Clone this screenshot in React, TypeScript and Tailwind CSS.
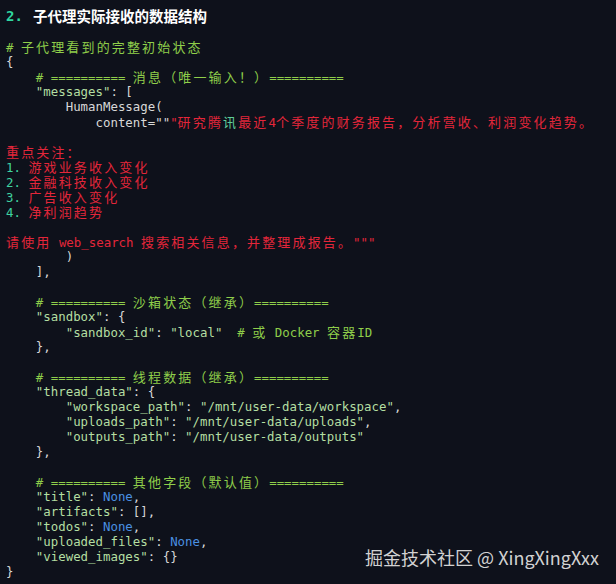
import React from "react";

type Tok = [string, string];

const W = "text-[#d8d8d8]";
const C = "text-[#8fce4a]";
const S = "text-[#b4dfa2]";
const R = "text-[#e3263a]";
const N = "text-[#3fd3a0]";
const K = "text-[#4a90e2]";
const G = "text-[#5fcf9a]";

const lines: Tok[][] = [
  [["# 子代理看到的完整初始状态", C]],
  [["{", W]],
  [["    # ========== 消息（唯一输入！）==========", C]],
  [["    ", W], ['"messages"', S], [": [", W]],
  [["        HumanMessage(", W]],
  [
    ["            content=", W],
    ['""', W],
    ['"研究腾', R],
    ["讯", G],
    ["最近4个季度的财务报告，分析营收、利润变化趋势。", R],
  ],
  [],
  [["重点关注：", R]],
  [["1. ", N], ["游戏业务收入变化", R]],
  [["2. ", N], ["金融科技收入变化", R]],
  [["3. ", N], ["广告收入变化", R]],
  [["4. ", N], ["净利润趋势", R]],
  [],
  [["请使用 web_search 搜索相关信息，并整理成报告。\"\"\"", R]],
  [["        )", W]],
  [["    ],", W]],
  [],
  [["    # ========== 沙箱状态（继承）==========", C]],
  [["    ", W], ['"sandbox"', S], [": {", W]],
  [["        ", W], ['"sandbox_id"', S], [": ", W], ['"local"', S], ["  # 或 Docker 容器ID", C]],
  [["    },", W]],
  [],
  [["    # ========== 线程数据（继承）==========", C]],
  [["    ", W], ['"thread_data"', S], [": {", W]],
  [["        ", W], ['"workspace_path"', S], [": ", W], ['"/mnt/user-data/workspace"', S], [",", W]],
  [["        ", W], ['"uploads_path"', S], [": ", W], ['"/mnt/user-data/uploads"', S], [",", W]],
  [["        ", W], ['"outputs_path"', S], [": ", W], ['"/mnt/user-data/outputs"', S]],
  [["    },", W]],
  [],
  [["    # ========== 其他字段（默认值）==========", C]],
  [["    ", W], ['"title"', S], [": ", W], ["None", K], [",", W]],
  [["    ", W], ['"artifacts"', S], [": [],", W]],
  [["    ", W], ['"todos"', S], [": ", W], ["None", K], [",", W]],
  [["    ", W], ['"uploaded_files"', S], [": ", W], ["None", K], [",", W]],
  [["    ", W], ['"viewed_images"', S], [": {}", W]],
  [["}", W]],
];

// CJK glyphs take two mono columns, like in a terminal
const Seg = ({ text, cls }: { text: string; cls: string }) => {
  const parts = text.split(/([\u3000-\u303f\u4e00-\u9fff\uff00-\uffef]+)/);
  return (
    <span className={cls}>
      {parts.map((p, i) =>
        i % 2 === 1 ? (
          <span
            key={i}
            className="font-['Noto_Sans_CJK_SC',sans-serif] text-[13px] leading-[15px] tracking-[2.15px]"
          >
            {p}
          </span>
        ) : (
          <span key={i}>{p}</span>
        )
      )}
    </span>
  );
};

export default function App() {
  return (
    <div className="relative h-[584px] w-[616px] overflow-hidden bg-[#0e111b] pl-[6px] font-['DejaVu_Sans_Mono','Noto_Sans_CJK_SC',monospace] text-[12.4px]">
      {/* title */}
      <div className="mt-[5px] flex h-[22px] items-center font-bold">
        <span className="w-[27px] text-[14px] text-[#2fd7a0]">2.</span>
        <span className="font-['Noto_Sans_CJK_SC',sans-serif] text-[14.5px] text-white">
          子代理实际接收的数据结构
        </span>
      </div>

      {/* code */}
      <div className="mt-[12px]">
        {lines.map((ln, i) => (
          <div key={i} className="h-[15px] whitespace-pre leading-[15px]">
            {ln.map(([t, c], j) => (
              <Seg key={j} text={t} cls={c} />
            ))}
          </div>
        ))}
      </div>

      {/* watermark */}
      <div className="absolute bottom-[17px] right-[17px] font-['Noto_Sans_CJK_SC',sans-serif] text-[18px] leading-[20px] text-[#d2d2d2]">
        掘金技术社区 @ XingXingXxx
      </div>
    </div>
  );
}
